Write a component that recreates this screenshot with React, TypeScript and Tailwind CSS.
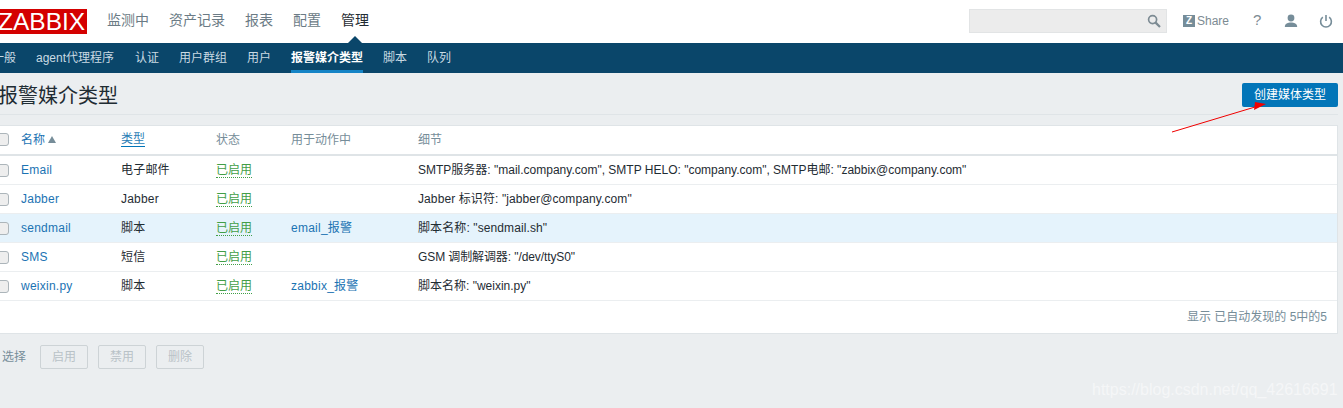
import React from "react";

const font = { fontFamily: '"Liberation Sans", "Noto Sans CJK SC", sans-serif' };

const rows = [
  { name: "Email", type: "电子邮件", action: "", detail: 'SMTP服务器: "mail.company.com", SMTP HELO: "company.com", SMTP电邮: "zabbix@company.com"', fit: "" },
  { name: "Jabber", type: "Jabber", action: "", detail: 'Jabber 标识符: "jabber@company.com"', fit: "tracking-[0.1px]" },
  { name: "sendmail", type: "脚本", action: "email_报警", detail: '脚本名称: "sendmail.sh"', hover: true, fit: "tracking-[0.1px]" },
  { name: "SMS", type: "短信", action: "", detail: 'GSM 调制解调器: "/dev/ttyS0"', fit: "tracking-[-0.1px]" },
  { name: "weixin.py", type: "脚本", action: "zabbix_报警", detail: '脚本名称: "weixin.py"', fit: "" },
];

function Check() {
  return <span className="block w-[13px] h-[13px] ml-[-4px] rounded-[3px] border border-[#acb5ba] bg-[#eeeeee]" />;
}

export default function App() {
  return (
    <div
      className="relative w-[1343px] h-[408px] overflow-hidden bg-[#ebeef0] text-[12px] text-[#1f2c33]"
      style={font}
    >
      {/* top bar */}
      <header className="h-[43px] bg-white flex items-center">
        <div className="w-[87px] h-[25px] mb-[1px] bg-[#d40000] text-white text-[24.5px] leading-[25px] whitespace-nowrap overflow-hidden font-light">
          <span className="block ml-[-2px]">ZABBIX</span>
        </div>
        <nav className="flex gap-[20px] ml-[20px] mb-[2px] text-[14px] text-[#6b7b85]">
          <span>监测中</span>
          <span>资产记录</span>
          <span>报表</span>
          <span>配置</span>
          <span className="relative text-[#1f2c33]">
            管理
            <span className="absolute left-[6px] top-[26px] w-0 h-0 border-x-[8px] border-x-transparent border-b-[8px] border-b-[#0a466a]" />
          </span>
        </nav>
        <div className="ml-auto flex items-center">
          <div className="w-[198px] h-[24px] bg-[#ececec] border border-[#e2e4e5] flex items-center justify-end pr-[5px] mr-[16px] mb-[2px]">
            <svg width="14" height="14" viewBox="0 0 14 14" fill="none" stroke="#7d8b93" strokeWidth="1.7">
              <circle cx="5.6" cy="5.6" r="4" />
              <path d="M8.6 8.6 L13 13" strokeWidth="2.2" />
            </svg>
          </div>
          <div className="flex items-center text-[#7d8b93] text-[12px] mr-[24px] mb-[2px]">
            <span className="w-[12px] h-[12px] bg-[#768d99] text-white text-[10px] leading-[12px] font-bold text-center mr-[2px]">Z</span>
            Share
          </div>
          <span className="text-[#7d8b93] text-[15px] font-normal mr-[23px] w-[8px] mb-[2px]">?</span>
          <svg className="mr-[21px] mb-[2px]" width="14" height="14" viewBox="0 0 14 14" fill="#768d99">
            <circle cx="7" cy="4" r="3.4" />
            <path d="M0.8 13 C0.8 9.6 4 8.6 7 8.6 C10 8.6 13.2 9.6 13.2 13 Z" />
          </svg>
          <svg className="mr-[10px] mb-[2px]" width="14" height="14" viewBox="0 0 14 14" fill="none" stroke="#768d99" strokeWidth="1.6">
            <path d="M7 1 V7" />
            <path d="M3.8 3.2 A5.4 5.4 0 1 0 10.2 3.2" />
          </svg>
        </div>
      </header>

      {/* sub nav */}
      <nav className="h-[30px] bg-[#0a466a] flex gap-[20px] text-[#c9dae3] leading-[30px]">
        <span className="ml-[-8px]">一般</span>
        <span className="w-[79px]">agent代理程序</span>
        <span>认证</span>
        <span>用户群组</span>
        <span>用户</span>
        <span className="text-white font-bold border-b-[3px] border-[#1584c6] h-[30px]">报警媒介类型</span>
        <span>脚本</span>
        <span>队列</span>
      </nav>

      {/* title */}
      <div className="h-[42px] mr-[5px] border-b border-[#dfe4e7] flex items-center justify-between">
        <h1 className="ml-[-2px] text-[20px] font-normal text-[#1f2c33] mt-[4px]">报警媒介类型</h1>
        <button className="w-[96px] h-[24px] mt-[3px] rounded-[2px] bg-[#0275b8] text-white text-[12px]">创建媒体类型</button>
      </div>

      {/* table card */}
      <div className="mt-[10px] mr-[5px] bg-white border-y border-r border-[#dfe4e7]">
        <div className="grid grid-cols-[21px_100px_95px_75px_127px_1fr] items-center h-[30px] pb-[1px] border-b-[2px] border-[#dfe4e7] text-[#768d99]">
          <Check />
          <span className="flex items-center gap-[3px] text-[#1b73b3]">
            名称
            <span className="w-0 h-0 border-x-[4px] border-x-transparent border-b-[7px] border-b-[#768d99]" />
          </span>
          <span className="text-[#2a7db5] w-fit border-b border-[#0275b8] leading-[13px]">类型</span>
          <span>状态</span>
          <span>用于动作中</span>
          <span>细节</span>
        </div>
        {rows.map((r) => (
          <div
            key={r.name}
            className={`grid grid-cols-[21px_100px_95px_75px_127px_1fr] items-center h-[29px] border-b border-[#ebeef0] ${r.hover ? "bg-[#e5f3fc]" : ""}`}
          >
            <Check />
            <span className="text-[#1b73b3] tracking-[0.25px]">{r.name}</span>
            <span className="tracking-[0.2px]">{r.type}</span>
            <span className="text-[#429e47] w-fit border-b border-dotted border-[#429e47] leading-[14px]">已启用</span>
            <span className="text-[#1b73b3] tracking-[0.25px]">{r.action}</span>
            <span className={r.fit}>{r.detail}</span>
          </div>
        ))}
        <div className="h-[32px] flex items-center justify-end pr-[10px] text-[#768d99]">显示 已自动发现的 5中的5</div>
      </div>

      {/* actions */}
      <div className="mt-[11px] flex items-center gap-[10px] text-[#768d99]">
        <span className="ml-[2px] mr-[4px]">选择</span>
        {["启用", "禁用", "删除"].map((t) => (
          <button key={t} className="w-[48px] h-[24px] rounded-[2px] border border-[#cdd3d6] text-[#b9c2c7] text-[12px]">{t}</button>
        ))}
      </div>

      {/* red annotation arrow */}
      <svg className="absolute left-[1165px] top-[100px]" width="110" height="40" viewBox="0 0 110 40" fill="none">
        <path d="M7 32 L90 7" stroke="#f00000" strokeWidth="1" />
        <path d="M90 2 L101 4 L89 10 Z" fill="#f00000" />
      </svg>

      {/* watermark */}
      <div className="absolute left-[1092px] top-[380px] text-[16px] leading-[19px] text-white/50 whitespace-nowrap">
        https://blog.csdn.net/qq_42616691
      </div>
    </div>
  );
}
